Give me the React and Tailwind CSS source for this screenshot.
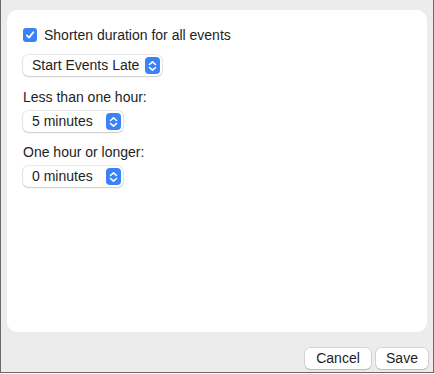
import React, { useState } from 'react';

function Stepper() {
  return (
    <span className="flex h-[17px] w-[15px] items-center justify-center rounded-[4px] bg-[#3a82f7]">
      <svg width="9" height="12" viewBox="0 0 9 12" fill="none" stroke="white" strokeWidth="1.6" strokeLinecap="round" strokeLinejoin="round">
        <path d="M1.5 4.5 L4.5 1.8 L7.5 4.5" />
        <path d="M1.5 7.5 L4.5 10.2 L7.5 7.5" />
      </svg>
    </span>
  );
}

function Popup({ label, width }) {
  return (
    <button
      className={`flex h-[21px] items-center justify-between rounded-[5px] bg-white pl-[9px] pr-[2px] text-[14px] text-[#1e1e1e] shadow-[0_0_0_0.5px_rgba(0,0,0,0.18),0_1px_1.5px_rgba(0,0,0,0.12)] ${width}`}
    >
      <span>{label}</span>
      <Stepper />
    </button>
  );
}

export default function App() {
  const [checked, setChecked] = useState(true);

  return (
    <div
      className="h-[373px] w-[434px] border-x border-b border-[#6a6a6a] bg-[#ececec] flex flex-col"
      style={{ fontFamily: '"Liberation Sans", Arial, sans-serif' }}
    >
      {/* panel */}
      <div className="mx-[6px] mt-[10px] h-[322px] rounded-[10px] bg-white px-[16px] pt-[15px] flex flex-col items-start">
        <label className="flex h-[20px] items-center gap-[7px] text-[14px] text-[#1e1e1e]">
          <span
            onClick={() => setChecked(!checked)}
            className="flex h-[14px] w-[14px] items-center justify-center rounded-[3px] bg-[#3a82f7]"
          >
            {checked && (
              <svg width="10" height="10" viewBox="0 0 10 10" fill="none" stroke="white" strokeWidth="1.8" strokeLinecap="round" strokeLinejoin="round">
                <path d="M1.8 5.3 L4 7.6 L8.3 2.2" />
              </svg>
            )}
          </span>
          Shorten duration for all events
        </label>

        <div className="mt-[10px]">
          <Popup label="Start Events Late" width="w-[139px]" />
        </div>

        <div className="mt-[13px] h-[16px] text-[14px] leading-[16px] text-[#1e1e1e]">Less than one hour:</div>
        <div className="mt-[6px]">
          <Popup label="5 minutes" width="w-[100px]" />
        </div>

        <div className="mt-[12px] h-[16px] text-[14px] leading-[16px] text-[#1e1e1e]">One hour or longer:</div>
        <div className="mt-[6px]">
          <Popup label="0 minutes" width="w-[100px]" />
        </div>
      </div>

      {/* footer buttons */}
      <div className="mt-[16px] flex justify-end gap-[5px] pr-[5px]">
        <button className="h-[21px] w-[66px] rounded-[5px] bg-white text-[14px] text-[#1e1e1e] shadow-[0_0_0_0.5px_rgba(0,0,0,0.18),0_1px_1.5px_rgba(0,0,0,0.12)]">
          Cancel
        </button>
        <button className="h-[21px] w-[52px] rounded-[5px] bg-white text-[14px] text-[#1e1e1e] shadow-[0_0_0_0.5px_rgba(0,0,0,0.18),0_1px_1.5px_rgba(0,0,0,0.12)]">
          Save
        </button>
      </div>
    </div>
  );
}
